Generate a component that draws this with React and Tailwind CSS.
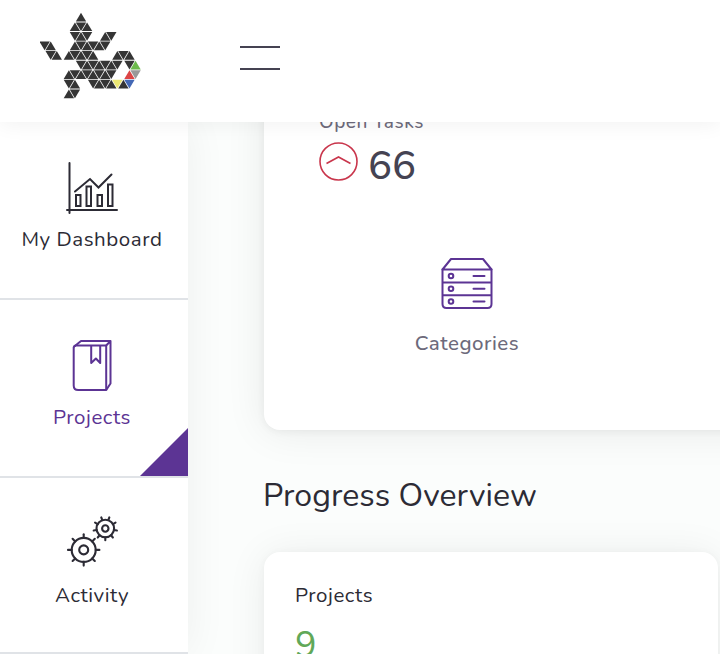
import React from "react";

const UNIT = 6.06;
const ROW = 9.58;

// Triangle cells of the gecko mark: row -> columns, relative to the head.
const GECKO = [
  [0],
  [-1, 0, 1],
  [-1, 0, 1, 4, 5],
  [-6, -5, -1, 0, 1, 2, 3, 4],
  [-5, -4, -2, -1, 0, 1, 2, 6, 7, 8],
  [0, 1, 2, 3, 4, 5, 6, 8, 9],
  [-2, -1, 0, 1, 2, 3, 4, 5, 8, 9],
  [-2, -1, 2, 3, 4, 5, 6, 7, 8],
  [-2, -1],
];

const ACCENTS = {
  "5:9": "#6dbb4c",
  "6:8": "#dc4545",
  "6:9": "#999999",
  "7:6": "#ece873",
  "7:8": "#4468b5",
};

function Logo() {
  return (
    <svg width="104" height="90" viewBox="0 0 104 90" className="ml-[40px] mt-[11px] shrink-0">
      {GECKO.flatMap((cols, r) =>
        cols.map((c) => {
          const x = 41 + c * UNIT;
          const y = 1.8 + r * ROW;
          const up = (r + c) % 2 === 0;
          const points = up
            ? `${x},${y} ${x + 5.2},${y + 8.7} ${x - 5.2},${y + 8.7}`
            : `${x - 5.2},${y} ${x + 5.2},${y} ${x},${y + 8.7}`;
          return <polygon key={`${r}:${c}`} points={points} fill={ACCENTS[`${r}:${c}`] || "#353535"} />;
        })
      )}
    </svg>
  );
}

function ChartIcon() {
  return (
    <svg width="52" height="52" viewBox="0 0 52 52" fill="none" stroke="currentColor" strokeWidth="2" strokeLinecap="round">
      <path d="M3.500 1v50M1 48h50" />
      <path d="M9 29.500 24 17l8.500 8.500L45.500 12.500" />
      <path d="M10 33h4.500v11H10zM20.500 24.500H25V44h-4.500zM31.500 33H36v11h-4.500zM42 22.500h4.500V44H42z" />
    </svg>
  );
}

function BookIcon() {
  return (
    <svg width="52" height="52" viewBox="0 0 52 52" fill="none" stroke="currentColor" strokeWidth="2" strokeLinejoin="round">
      <path d="M7.700 7v38.500q0 4.500 4.500 4.500h28V5.500H10.200Q7.700 5.500 7.700 8" />
      <path d="M8.200 6.500 15 1h29.500v42.500l-4.300 6.500M40.200 5.500 44.500 1M25.200 6v17l4.700-4.500 4.300 4.500V6" />
    </svg>
  );
}

function Gear({ x, y, outer, inner, teeth, reach, offset = 0 }) {
  return (
    <g transform={`translate(${x} ${y})`}>
      <circle r={outer} />
      <circle r={inner} />
      {Array.from({ length: teeth }, (_, i) => (
        <path key={i} d={`M0 ${-outer}V${-reach}`} transform={`rotate(${offset + (i * 360) / teeth})`} />
      ))}
    </g>
  );
}

function GearsIcon() {
  return (
    <svg width="52" height="52" viewBox="0 0 52 52" fill="none" stroke="currentColor" strokeWidth="2.100" strokeLinecap="round" className="overflow-visible">
      <Gear x={17.700} y={31.900} outer={12} inner={4.500} teeth={8} reach={15.700} />
      <Gear x={39.300} y={10.500} outer={8.800} inner={3.200} teeth={9} reach={11.800} offset={-20} />
    </svg>
  );
}

function CategoriesIcon() {
  return (
    <svg width="52" height="52" viewBox="0 0 52 52" fill="none" stroke="currentColor" strokeWidth="2" strokeLinejoin="round" strokeLinecap="round" className="text-[#5c3494]">
      <path d="M1.500 11.500 10 1h32L50.500 11.500z" />
      <path d="M1.500 11.500v34.500q0 4 4 4h41q4 0 4-4V11.500M2 24.500h48M2 37.300h48" />
      <circle cx="10" cy="18" r="2.300" />
      <circle cx="10" cy="30.800" r="2.300" />
      <circle cx="10" cy="43.500" r="2.300" />
      <path d="M32.500 18h11M32.500 30.800h11M32.500 43.500h11" />
    </svg>
  );
}

function NavItem({ icon, label, active, last }) {
  return (
    <a
      className={`relative flex shrink-0 flex-col items-center border-b-2 border-[#e0e3e7] pr-1 pt-[40px] ${
        last ? "h-[176px]" : "h-[178px]"
      } ${active ? "text-[#5c3494]" : "text-[#2c2b35]"}`}
    >
      {icon}
      <span className="mt-[10px] whitespace-nowrap text-[20.500px] leading-[30px] tracking-[0.55px]">{label}</span>
      {active && (
        <svg width="48" height="48" viewBox="0 0 48 48" className="absolute bottom-0 right-0">
          <path d="M48 0v48H0z" fill="#5c3494" />
        </svg>
      )}
    </a>
  );
}

export default function App() {
  return (
    <div className="flex h-[654px] w-[720px] flex-col overflow-hidden bg-[#fbfdfc] font-['Nunito','Lato',sans-serif] text-[#2c2b35] antialiased">
      <header className="relative z-20 flex h-[122px] shrink-0 items-start bg-white shadow-[0_2px_20px_rgba(0,0,0,0.06)]">
        <Logo />
        <button aria-label="Menu" className="ml-[96px] mt-[46px] flex w-10 flex-col gap-5">
          <span className="h-0.5 w-full bg-[#454352]" />
          <span className="h-0.5 w-full bg-[#454352]" />
        </button>
      </header>

      <div className="flex min-h-0 flex-1">
        <nav className="relative z-10 flex w-[188px] shrink-0 flex-col bg-white shadow-[0_0_40px_rgba(0,0,0,0.06)]">
          <NavItem icon={<ChartIcon />} label="My Dashboard" />
          <NavItem icon={<BookIcon />} label="Projects" active />
          <NavItem icon={<GearsIcon />} label="Activity" last />
        </nav>

        <main className="flex min-w-0 flex-1 flex-col pl-[76px]">
          <section className="-mt-8 flex h-[340px] w-[600px] shrink-0 flex-col rounded-[16px] bg-white shadow-[0_2px_40px_rgba(0,0,0,0.08),0_1px_8px_rgba(0,0,0,0.06)]">
            <div className="ml-[55px] mt-[17px] text-[19px] font-medium leading-[30px] tracking-[0.5px] text-[#6d6a7b]">Open Tasks</div>
            <div className="-mt-px ml-[55px] flex h-[52px] items-center">
              <svg width="39" height="39" viewBox="0 0 39 39" fill="none" stroke="#c9364c" strokeWidth="1.600" className="mt-[-2px]">
                <circle cx="19.500" cy="19.500" r="18.500" />
                <path d="m7.500 21.500 12-6.500 12 6.500" />
              </svg>
              <span className="ml-[10px] mt-[8px] text-[40px] font-medium leading-[50px] text-[#454352]">66</span>
            </div>
            <div className="flex w-[406px] flex-col items-center pt-[70px]">
              <CategoriesIcon />
              <span className="mt-[18px] text-[20.500px] font-medium leading-[30px] tracking-[0.5px] text-[#6d6a7b]">Categories</span>
            </div>
          </section>

          <h2 className="-ml-px mt-[42px] shrink-0 text-[32px] leading-[48px] tracking-[0.06px]">Progress Overview</h2>

          <section className="mt-[32px] h-[240px] w-[454px] shrink-0 rounded-[16px] bg-white pl-[31px] pt-[28px] shadow-[0_2px_40px_rgba(0,0,0,0.07),0_1px_8px_rgba(0,0,0,0.04)]">
            <div className="text-[20.500px] leading-[30px] tracking-[0.55px]">Projects</div>
            <div className="mt-[8px] text-[36px] leading-[56px] text-[#61a858]">9</div>
          </section>
        </main>
      </div>
    </div>
  );
}
